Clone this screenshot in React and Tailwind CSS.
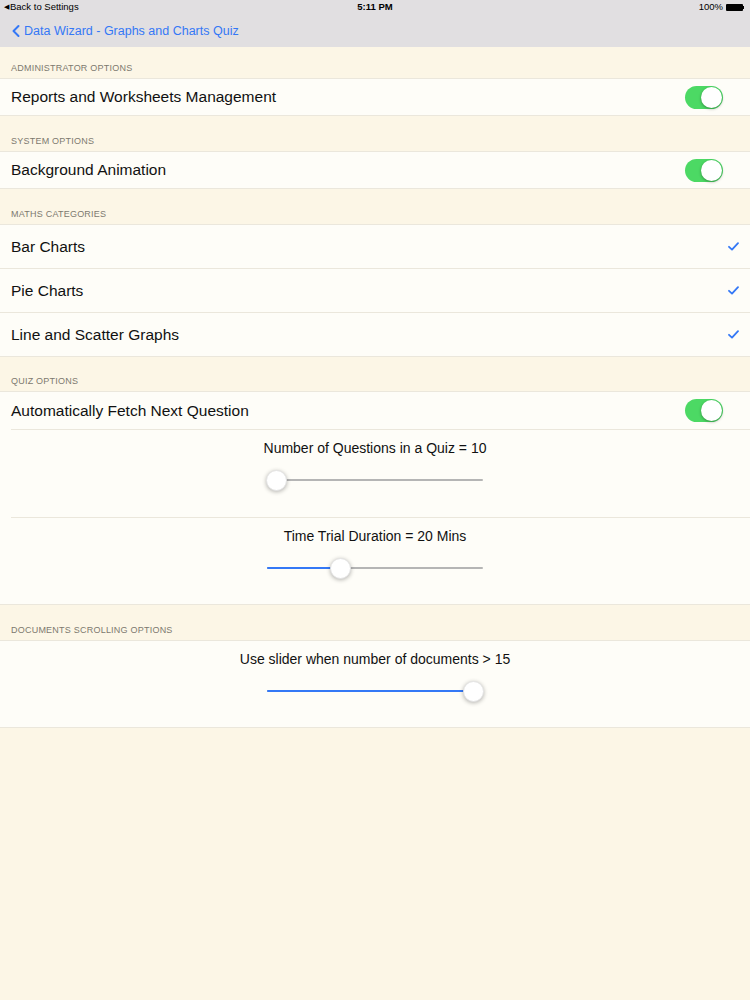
import { FiChevronLeft } from "react-icons/fi";

function Toggle() {
  return (
    <div className="relative w-[38px] h-[23px] rounded-full bg-[#4cd964]">
      <div className="absolute right-[1px] top-[1px] w-[21px] h-[21px] rounded-full bg-white shadow-[0_1px_3px_rgba(0,0,0,0.35)]" />
    </div>
  );
}

function Check() {
  return (
    <svg width="11" height="9" viewBox="0 0 11 9" fill="none">
      <path d="M1 4.8 L4 7.6 L10 1.2" stroke="#3478f6" strokeWidth="1.8" strokeLinecap="round" strokeLinejoin="round" />
    </svg>
  );
}

function Slider({ pos }) {
  return (
    <div className="relative w-[216px] h-[22px] flex items-center">
      <div className="w-full h-[2px] bg-[#b5b5b5] rounded" />
      <div className="absolute left-0 h-[2px] bg-[#3478f6] rounded" style={{ width: pos }} />
      <div
        className="absolute top-[1px] w-[21px] h-[21px] rounded-full bg-white shadow-[0_1px_4px_rgba(0,0,0,0.3)] border border-[#e4e4e4]"
        style={{ left: pos - 10 }}
      />
    </div>
  );
}

function Header({ children, h = "h-[35px]" }) {
  return (
    <div className={`${h} flex items-end pb-[3px] px-[11px] text-[9px] tracking-wide text-[#7d796f] uppercase`}>
      {children}
    </div>
  );
}

function Row({ label, right, h = "h-[36px]" }) {
  return (
    <div className={`${h} flex items-center justify-between pl-[11px] pr-[27px]`}>
      <span className="text-[15.5px] text-[#111]">{label}</span>
      {right}
    </div>
  );
}

function SliderCell({ label, pos, h = "h-[86px]" }) {
  return (
    <div className={`${h} flex flex-col items-center pt-[8px]`}>
      <span className="text-[14px] text-[#111]">{label}</span>
      <div className="mt-[10px]">
        <Slider pos={pos} />
      </div>
    </div>
  );
}

export default function App() {
  return (
    <div className="w-[750px] h-[1000px] bg-[#fcf6e6] font-['Liberation_Sans',Arial,sans-serif] overflow-hidden">
      <div className="bg-[#e1dfe1]">
        <div className="h-[15px] relative flex items-center text-[9.5px] text-black">
          <span className="absolute left-[4px] flex items-center gap-[1px]">
            <span className="text-[7px]">◀</span>Back to Settings
          </span>
          <span className="absolute left-0 right-0 text-center font-semibold">5:11 PM</span>
          <span className="absolute right-[6px] flex items-center gap-[3px]">
            100%
            <span className="w-[17px] h-[7px] bg-black rounded-[1px]" />
            <span className="w-[1px] h-[3px] bg-black -ml-[3px]" />
          </span>
        </div>
        <div className="h-[32px] flex items-center pl-[6px] text-[#3478f6] text-[12.5px]">
          <FiChevronLeft size={20} strokeWidth={2.4} />
          <span className="ml-[-2px]">Data Wizard - Graphs and Charts Quiz</span>
        </div>
      </div>

      <Header h="h-[31px]">Administrator Options</Header>
      <div className="bg-[#fefdf8] border-y border-[#ebe7dc]">
        <Row label="Reports and Worksheets Management" right={<Toggle />} />
      </div>

      <Header>System Options</Header>
      <div className="bg-[#fefdf8] border-y border-[#ebe7dc]">
        <Row label="Background Animation" right={<Toggle />} />
      </div>

      <Header>Maths Categories</Header>
      <div className="bg-[#fefdf8] border-y border-[#ebe7dc]">
        <Row h="h-[43px]" label="Bar Charts" right={<span className="-mr-[16px]"><Check /></span>} />
        <div className="h-px bg-[#ebe7dc]" />
        <Row h="h-[43px]" label="Pie Charts" right={<span className="-mr-[16px]"><Check /></span>} />
        <div className="h-px bg-[#ebe7dc]" />
        <Row h="h-[43px]" label="Line and Scatter Graphs" right={<span className="-mr-[16px]"><Check /></span>} />
      </div>

      <Header h="h-[34px]">Quiz Options</Header>
      <div className="bg-[#fefdf8] border-y border-[#ebe7dc]">
        <Row h="h-[37px]" label="Automatically Fetch Next Question" right={<Toggle />} />
        <div className="h-px bg-[#ebe7dc] ml-[11px]" />
        <SliderCell h="h-[87px]" label="Number of Questions in a Quiz = 10" pos={9} />
        <div className="h-px bg-[#ebe7dc] ml-[11px]" />
        <SliderCell label="Time Trial Duration = 20 Mins" pos={73} />
      </div>

      <Header>Documents Scrolling Options</Header>
      <div className="bg-[#fefdf8] border-y border-[#ebe7dc]">
        <SliderCell label="Use slider when number of documents > 15" pos={206} />
      </div>
    </div>
  );
}
